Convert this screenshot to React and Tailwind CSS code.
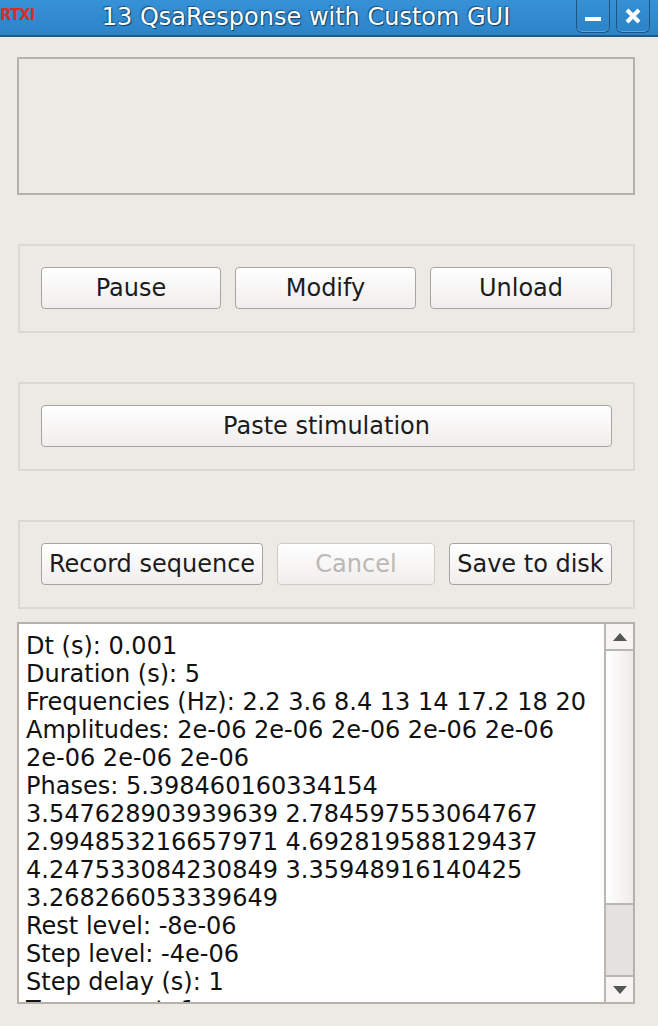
import React from "react";

const lines = [
  "Dt (s): 0.001",
  "Duration (s): 5",
  "Frequencies (Hz): 2.2 3.6 8.4 13 14 17.2 18 20",
  "Amplitudes: 2e-06 2e-06 2e-06 2e-06 2e-06",
  "2e-06 2e-06 2e-06",
  "Phases: 5.398460160334154",
  "3.547628903939639 2.784597553064767",
  "2.994853216657971 4.692819588129437",
  "4.247533084230849 3.35948916140425",
  "3.268266053339649",
  "Rest level: -8e-06",
  "Step level: -4e-06",
  "Step delay (s): 1",
  "Trace count: 1",
];

// Qt-style push button
const Button = ({ children, className = "", disabled = false }) => (
  <button
    disabled={disabled}
    className={
      "h-[42px] rounded-[4px] border bg-gradient-to-b from-white to-[#f0eeec] text-[24px] leading-none " +
      (disabled
        ? "border-[#cfcbc7] text-[#bcb8b4] "
        : "border-[#a8a5a1] text-[#1c1c1c] ") +
      className
    }
  >
    {children}
  </button>
);

const GroupBox = ({ children }) => (
  <div className="flex gap-[14px] border-2 border-[#dcd8d4] px-[21px] pt-[21px] pb-[22px]">
    {children}
  </div>
);

const TitleButton = ({ children }) => (
  <div className="flex h-[33px] w-[34px] items-center justify-center rounded-b-[6px] border border-t-0 border-[#1e5683] bg-gradient-to-b from-[#3590d4] to-[#2c84c8] shadow-[inset_0_-1px_0_#56a6e0]">
    {children}
  </div>
);

export default function App() {
  return (
    <div className="flex h-[1026px] w-[658px] flex-col bg-[#edeae6] font-['DejaVu_Sans',sans-serif]">
      {/* title bar */}
      <div className="flex h-[37px] items-start border-b-2 border-[#1b5a8b] bg-gradient-to-b from-[#3791d6] to-[#2c84c8]">
        <div className="w-[36px] overflow-hidden whitespace-nowrap pt-[7px] text-[15px] font-bold leading-[16px] tracking-[-1px] text-[#d1312c]">
          RTXI
        </div>
        <div className="flex-1 pt-[1px] text-center text-[24px] leading-[32px] text-white [text-shadow:1px_1px_1px_#0f3c62,-1px_-1px_1px_#1a5587]">
          13 QsaResponse with Custom GUI
        </div>
        <div className="flex gap-[6px] pr-[8px]">
          <TitleButton>
            <div className="mt-[6px] h-[4px] w-[16px] bg-white" />
          </TitleButton>
          <TitleButton>
            <svg width="16" height="16" viewBox="0 0 16 16">
              <path d="M2 2 L14 14 M14 2 L2 14" stroke="white" strokeWidth="4" />
            </svg>
          </TitleButton>
        </div>
      </div>

      <div className="flex flex-col pl-[17px] pr-[23px] pt-[20px]">
        {/* empty frame */}
        <div className="h-[138px] border-2 border-[#b5b1ad]" />

        <div className="mt-[49px] ml-[1px]">
          <GroupBox>
            <Button className="w-[180px]">Pause</Button>
            <Button className="w-[181px]">Modify</Button>
            <Button className="flex-1">Unload</Button>
          </GroupBox>
        </div>

        <div className="mt-[49px] ml-[1px]">
          <GroupBox>
            <Button className="flex-1">Paste stimulation</Button>
          </GroupBox>
        </div>

        <div className="mt-[49px] ml-[1px]">
          <GroupBox>
            <Button className="w-[222px]">Record sequence</Button>
            <Button className="w-[158px]" disabled>
              Cancel
            </Button>
            <Button className="flex-1">Save to disk</Button>
          </GroupBox>
        </div>

        {/* text area with scrollbar */}
        <div className="mt-[13px] flex h-[382px] border-2 border-[#b5b1ad] bg-white">
          <div className="flex-1 overflow-hidden pl-[7px] pt-[8px] text-[24px] leading-[28px] text-[#111]">
            {lines.map((l, i) => (
              <div key={i} className="whitespace-nowrap">
                {l}
              </div>
            ))}
          </div>
          <div className="flex w-[29px] flex-col border-l-2 border-[#bab6b2]">
            <div className="flex h-[27px] items-center justify-center border-b-2 border-[#bab6b2] bg-[#f6f5f4]">
              <svg width="14" height="8" viewBox="0 0 14 8">
                <path d="M7 0 L14 8 L0 8 Z" fill="#555" />
              </svg>
            </div>
            <div className="h-[254px] border-b-2 border-[#bab6b2] bg-gradient-to-r from-white to-[#eeecea]" />
            <div className="flex-1 bg-[#e4e1de]" />
            <div className="flex h-[27px] items-center justify-center border-t-2 border-[#bab6b2] bg-[#f6f5f4]">
              <svg width="14" height="8" viewBox="0 0 14 8">
                <path d="M0 0 L14 0 L7 8 Z" fill="#555" />
              </svg>
            </div>
          </div>
        </div>
      </div>
    </div>
  );
}
